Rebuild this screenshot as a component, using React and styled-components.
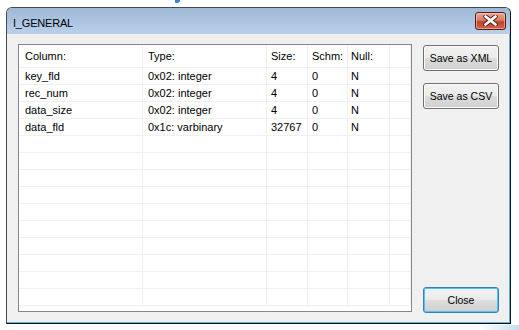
import React from 'react';
import styled, { createGlobalStyle } from 'styled-components';

const GlobalStyle = createGlobalStyle`
  html, body {
    margin: 0;
    padding: 0;
    background: #ffffff;
  }
  body {
    font-family: "Liberation Sans", Arial, sans-serif;
    font-size: 11px;
    color: #000;
  }
`;

const Page = styled.div`
  width: 519px;
  height: 330px;
  position: relative;
  overflow: hidden;
  padding: 7px 0 0 6px;
  box-sizing: border-box;
`;

const Pointer = styled.div`
  position: absolute;
  left: 175px;
  top: 0;
  width: 5px;
  height: 3px;
  background: #3a7fd6;
  border-radius: 0 0 3px 1px;
`;

const Window = styled.div`
  width: 505px;
  height: 317px;
  display: flex;
  flex-direction: column;
  box-sizing: border-box;
  border: 1px solid #3f4a55;
  border-right-color: #101418;
  border-bottom-color: #101418;
  border-radius: 6px 6px 0 0;
  background: #f0f0f0;
  box-shadow: inset -1px -1px 0 #5fb3e3;
  overflow: hidden;
`;

const TitleBar = styled.div`
  height: 25px;
  flex: none;
  display: flex;
  align-items: center;
  justify-content: space-between;
  padding: 1px 4px 0 6px;
  background: linear-gradient(#9fb8d5, #b9d0ea);
`;

const Title = styled.span`
  font-size: 11px;
  letter-spacing: -0.2px;
  padding-top: 2px;
  color: #000;
`;

const CloseX = styled.button`
  width: 31px;
  height: 18px;
  margin-top: -2px;
  padding: 0;
  border: 1px solid #5a1a12;
  border-radius: 3px;
  background: linear-gradient(#e6a999 0%, #d77a63 45%, #c2412b 55%, #d0654c 100%);
  box-shadow: inset 0 0 0 1px rgba(255, 220, 210, 0.5);
  display: flex;
  align-items: center;
  justify-content: center;
`;

const Client = styled.div`
  flex: 1;
  display: flex;
  gap: 11px;
  padding: 10px 10px 10px 11px;
`;

const List = styled.div`
  width: 394px;
  height: 268px;
  box-sizing: border-box;
  border: 1px solid #828790;
  background: #ffffff;
  overflow: hidden;
`;

const Grid = styled.div`
  display: grid;
  grid-template-columns: 124px 124px 41px 40px 42px 21px;
`;

const Cell = styled.div`
  height: ${(p) => (p.$head ? 23 : 17)}px;
  box-sizing: border-box;
  border-right: 1px solid #f0f0f0;
  border-bottom: 1px solid #f0f0f0;
  padding-left: ${(p) => p.$pad}px;
  display: flex;
  align-items: center;
  white-space: nowrap;
  overflow: hidden;
  color: #000;
`;

const Side = styled.div`
  width: 76px;
  display: flex;
  flex-direction: column;
  gap: 12px;
  padding-top: 1px;
`;

const Button = styled.button`
  width: 76px;
  height: 26px;
  padding: 0;
  font-family: "Liberation Sans", Arial, sans-serif;
  font-size: 10.5px;
  color: #000;
  border: 1px solid ${(p) => (p.$focused ? '#3c7fb1' : '#707070')};
  border-radius: 3px;
  background: linear-gradient(#f2f2f2 0%, #ebebeb 50%, #dddddd 51%, #cfcfcf 100%);
  box-shadow: inset 0 0 0 1px ${(p) => (p.$focused ? '#48c4f6' : '#fcfcfc')};
`;

const Spacer = styled.div`
  flex: 1;
`;

const Fade = styled.div`
  position: absolute;
  right: 0;
  bottom: 0;
  width: 40px;
  height: 5px;
  background: linear-gradient(90deg, rgba(200, 225, 245, 0), #c9def0);
`;

const columns = [
  { key: 'name', title: 'Column:', pad: 6 },
  { key: 'type', title: 'Type:', pad: 5 },
  { key: 'size', title: 'Size:', pad: 4 },
  { key: 'schm', title: 'Schm:', pad: 4 },
  { key: 'nul', title: 'Null:', pad: 3 },
  { key: 'extra', title: '', pad: 0 },
];

const rows = [
  { name: 'key_fld', type: '0x02: integer', size: '4', schm: '0', nul: 'N' },
  { name: 'rec_num', type: '0x02: integer', size: '4', schm: '0', nul: 'N' },
  { name: 'data_size', type: '0x02: integer', size: '4', schm: '0', nul: 'N' },
  { name: 'data_fld', type: '0x1c: varbinary', size: '32767', schm: '0', nul: 'N' },
];

const allRows = [...rows, ...Array.from({ length: 10 }, () => ({}))];

const CloseGlyph = () => (
  <svg width="15" height="11" viewBox="0 0 15 11">
    <path
      d="M2.5 1.5 L12.5 9.5 M12.5 1.5 L2.5 9.5"
      stroke="#4a1a14"
      strokeWidth="4.4"
      strokeLinecap="round"
    />
    <path
      d="M2.5 1.5 L12.5 9.5 M12.5 1.5 L2.5 9.5"
      stroke="#ffffff"
      strokeWidth="2.8"
      strokeLinecap="round"
    />
  </svg>
);

const App = () => (
  <Page>
    <GlobalStyle />
    <Pointer />
    <Window>
      <TitleBar>
        <Title>I_GENERAL</Title>
        <CloseX>
          <CloseGlyph />
        </CloseX>
      </TitleBar>
      <Client>
        <List>
          <Grid>
            {columns.map((c) => (
              <Cell key={c.key} $head $pad={c.pad}>
                {c.title}
              </Cell>
            ))}
            {allRows.map((r, i) =>
              columns.map((c) => (
                <Cell key={`${i}-${c.key}`} $pad={c.pad}>
                  {r[c.key] || ''}
                </Cell>
              ))
            )}
          </Grid>
        </List>
        <Side>
          <Button>Save as XML</Button>
          <Button>Save as CSV</Button>
          <Spacer />
          <Button $focused>Close</Button>
        </Side>
      </Client>
    </Window>
    <Fade />
  </Page>
);

export default App;
